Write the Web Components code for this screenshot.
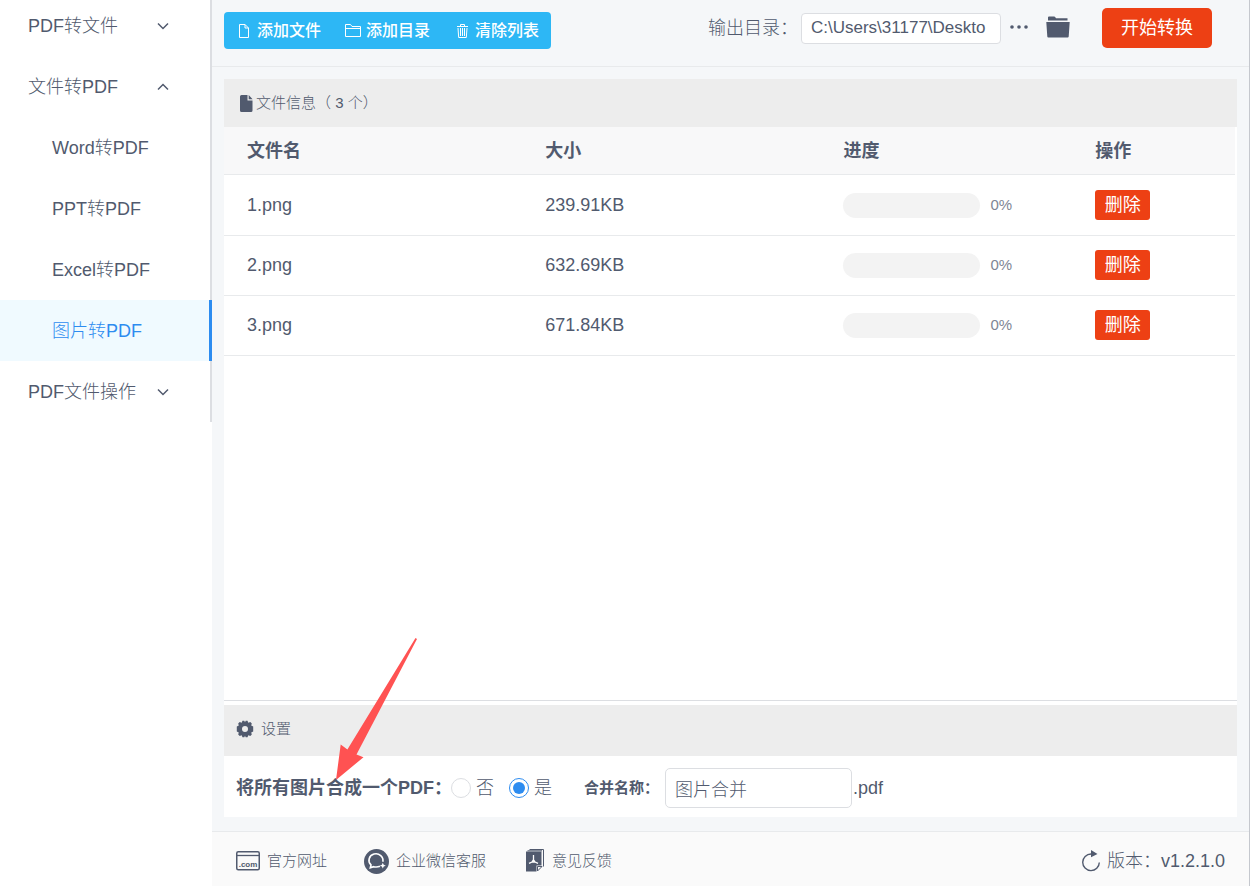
<!DOCTYPE html>
<html lang="zh-CN">
<head>
<meta charset="utf-8">
<meta name="viewport" content="width=device-width, initial-scale=1">
<title>图片转PDF</title>
<style>
    html, body { height: 100%; }
    body {
        margin: 0;
        background: #fff;
        color: #515a6e;
        font-family: "Liberation Sans", "Noto Sans CJK SC", sans-serif;
        font-size: 18px;
        font-weight: 300;
        line-height: 24px;
    }
</style>
</head>
<body>
<pdf-app>
    <pdf-menu slot="menu">
        <pdf-menu-item group>PDF转文件</pdf-menu-item>
        <pdf-menu-item group open>文件转PDF</pdf-menu-item>
        <pdf-menu-item>Word转PDF</pdf-menu-item>
        <pdf-menu-item>PPT转PDF</pdf-menu-item>
        <pdf-menu-item>Excel转PDF</pdf-menu-item>
        <pdf-menu-item active>图片转PDF</pdf-menu-item>
        <pdf-menu-item group>PDF文件操作</pdf-menu-item>
    </pdf-menu>
    <pdf-toolbar slot="toolbar"></pdf-toolbar>
    <pdf-file-list slot="files">
        <pdf-heading slot="heading" icon="file">文件信息（ 3 个）</pdf-heading>
    </pdf-file-list>
    <pdf-settings slot="settings">
        <pdf-heading slot="heading" icon="gear" spaced>设置</pdf-heading>
    </pdf-settings>
    <pdf-footer slot="footer">
        <pdf-footer-link icon="com">官方网址</pdf-footer-link>
        <pdf-footer-link icon="chat">企业微信客服</pdf-footer-link>
        <pdf-footer-link icon="feedback">意见反馈</pdf-footer-link>
        <pdf-footer-link slot="version" icon="refresh" large>版本：v1.2.1.0</pdf-footer-link>
    </pdf-footer>
</pdf-app>
<script>
const ICONS = {
    down: [12, 8, '<path d="M1 1.500l5 5 5-5" fill="none" stroke="currentColor" stroke-width="1.500"/>'],
    up: [12, 8, '<path d="M1 6.500l5-5 5 5" fill="none" stroke="currentColor" stroke-width="1.500"/>'],
    doc: [16, 16, '<path d="M3.500 1.500h5.500l3.500 3.500v9.500h-9zM9 1.500v3.500h3.500" fill="none" stroke="currentColor"/>'],
    folderLine: [16, 16, '<path d="M.5 13.500v-12h5l1.500 2h8.500v10zM.5 5.500h15" fill="none" stroke="currentColor"/>'],
    trash: [16, 16, '<path d="M3 3.500h11M6.500 3v-1.500h4v1.500M4 5l.7 9.500h7.600l.7-9.500M6.500 5v8M8.500 5v8M10.500 5v8" fill="none" stroke="currentColor"/>'],
    more: [18, 4, '<g fill="currentColor"><circle cx="2" cy="2" r="1.800"/><circle cx="9" cy="2" r="1.800"/><circle cx="16" cy="2" r="1.800"/></g>'],
    folder: [24, 22, '<path d="M2 4.500V1.500Q2 .5 3 .5h5q1 0 1.500 1l.5.8h11.500v2.200zM.3 6h23.400l-1 14.500q-.1 1-1 1H2.300q-.9 0-1-1z" fill="currentColor"/>'],
    file: [13, 17, '<path d="M1.500 0h6v5.500h5v10q0 1.500-1.500 1.500h-9.500q-1.500 0-1.500-1.500v-14q0-1.500 1.500-1.500zM8.700 0l3.900 4.300h-3.900z" fill="currentColor"/>'],
    gear: [18, 18, '<path fill-rule="evenodd" d="M6.500.8h1.800l.7 1.400.7-1.400h1.800l.8 2 2-.8 1.500 1.500-.6 2.100 2 .9v5l-2 .9.6 2.100-1.500 1.500-2-.8-.8 2H9.700L9 15.800l-.7 1.400H6.500l-.8-2-2 .8-1.500-1.500.6-2.100-2-.9v-5l2-.9-.6-2.100L3.700 2l2 .8zM9 6a3 3 0 1 0 0 6 3 3 0 0 0 0-6z" fill="currentColor"/>'],
    // domain badge, the extension is plain svg text
    com: [24, 20, '<rect x=".75" y=".75" width="22.500" height="18" rx="1.500" fill="none" stroke="currentColor" stroke-width="1.500"/><path d="M1 4.500h22" stroke="currentColor" stroke-width="1.300"/><text x="12" y="16" text-anchor="middle" font-family="Liberation Sans" font-size="8" font-weight="bold" fill="currentColor">.com</text>'],
    chat: [25, 25, '<circle cx="12.500" cy="12.500" r="12.500" fill="currentColor"/><path d="M16 17.300q-3.200 1.300-6.400.4l-3.300 1.100.7-2.900a7 6.500 0 1 1 11.800-3.200" fill="none" stroke="#fff" stroke-width="1.600"/><path d="M18.800 13.800l.9 2 2.100.9-2.100.9-.9 2-.9-2-2.100-.9 2.100-.9z" fill="#fff"/>'],
    feedback: [22, 23, '<path d="M6.500.5h14v17M4.500 1.800h14.500" fill="none" stroke="currentColor"/><path d="M3 2.500h15.500v14h-5v6H3z" fill="currentColor"/><path d="M14.500 22v-4.500h4.500z" fill="none" stroke="currentColor"/><path d="M10.500 6v4.500l-1.500 2.500-3 1.300M10.500 11l1.500 2 3 1.300M9 13h3" fill="none" stroke="#fff" stroke-width="1.300"/>'],
    refresh: [18, 22, '<path d="M12.500 4H9A8.300 8.300 0 1 0 17.300 12.500" fill="none" stroke="currentColor" stroke-width="1.400"/><path d="M9 0l6.500 4-6.500 3.200z" fill="currentColor"/>']
};

class PdfElement extends HTMLElement {
    constructor() {
        super();
        this.template = document.createElement('template');
        this.attachShadow({ mode: 'open' });
    }
    connectedCallback() {
        this.render();
    }
    render() {
        this.shadowRoot.innerHTML = '';
        this.template.innerHTML = this.html;
        this.shadowRoot.appendChild(this.template.content.cloneNode(true));
    }
}

class PdfIcon extends PdfElement {
    static get tag() { return 'pdf-icon'; }
    get html() {
        const [w, h, body] = ICONS[this.getAttribute('name')];
        return `
        <style>
        :host { display: block; flex: none; }
        svg { display: block; }
        </style>
        <svg width="${w}" height="${h}" viewBox="0 0 ${w} ${h}" aria-hidden="true">${body}</svg>`;
    }
}

class PdfApp extends PdfElement {
    static get tag() { return 'pdf-app'; }
    get html() {
        return `
        <style>
        :host {
            box-sizing: border-box;
            display: grid;
            grid-template-columns: 212px minmax(0, 1fr);
            min-height: 100vh;
            border-right: 1px solid #c5c8ce;
            position: relative;
        }
        main {
            background: #f5f7f9;
            display: flex;
            flex-direction: column;
        }
        .work {
            display: flex;
            flex: 1;
            flex-direction: column;
            padding: 12px 12px 14px;
        }
        slot[name=files] { display: flex; flex: 1; }
        .arrow {
            left: 336px;
            bottom: 106px;
            pointer-events: none;
            position: absolute;
        }
        </style>
        <slot name="menu"></slot>
        <main>
            <slot name="toolbar"></slot>
            <div class="work">
                <slot name="files"></slot>
                <slot name="settings"></slot>
            </div>
            <slot name="footer"></slot>
        </main>
        <svg class="arrow" width="82" height="142" viewBox="0 0 82 142" aria-hidden="true">
            <path d="M81 1L20.500 116.500l7 2.700L0 142l4.700-35.500 6.700 5L79.500 0z" fill="#ff5252"/>
        </svg>`;
    }
}

class PdfMenu extends PdfElement {
    static get tag() { return 'pdf-menu'; }
    get html() {
        return `
        <style>
        :host { display: block; overflow: hidden; }
        /* the list sits slightly scrolled under the window edge */
        nav {
            box-shadow: inset -2px 0 #dcdee2;
            margin-top: -5px;
        }
        </style>
        <nav><slot></slot></nav>`;
    }
}

class PdfMenuItem extends PdfElement {
    static get tag() { return 'pdf-menu-item'; }
    get html() {
        const group = this.hasAttribute('group');
        const open = this.hasAttribute('open');
        return `
        <style>
        :host { display: block; }
        button, a {
            align-items: center;
            background: none;
            border: 0;
            box-sizing: border-box;
            color: inherit;
            cursor: pointer;
            display: flex;
            font: inherit;
            height: 61px;
            justify-content: space-between;
            padding: 0 43px 0 28px;
            text-decoration: none;
            width: 100%;
        }
        a { padding-left: 52px; }
        :host([active]) a {
            background: #f0faff;
            border-right: 3px solid #2d8cf0;
            color: #2d8cf0;
        }
        </style>
        ${group
            ? `<button type="button" aria-expanded="${open}"><slot></slot><pdf-icon name="${open ? 'up' : 'down'}"></pdf-icon></button>`
            : '<a href="#"><span><slot></slot></span></a>'}`;
    }
}

class PdfToolbar extends PdfElement {
    static get tag() { return 'pdf-toolbar'; }
    get html() {
        return `
        <style>
        :host {
            border-bottom: 1px solid #e8eaec;
            box-sizing: border-box;
            display: flex;
            height: 67px;
            justify-content: space-between;
            padding: 0 37px 0 12px;
        }
        button {
            background: none;
            border: 0;
            color: inherit;
            cursor: pointer;
            font: inherit;
            padding: 0;
        }
        .group {
            background: #2db7f5;
            border-radius: 4px;
            color: #fff;
            display: flex;
            height: 37px;
            margin-top: 12px;
        }
        .group button {
            align-items: center;
            display: flex;
            font-size: 16px;
            font-weight: 500;
            gap: 5px;
            padding: 0 12px;
        }
        .output {
            align-items: center;
            display: flex;
            height: 56px;
        }
        input {
            background: #fff;
            border: 1px solid #dcdee2;
            border-radius: 4px;
            box-sizing: border-box;
            color: inherit;
            font: inherit;
            font-size: 17px;
            height: 31px;
            margin: 0 9px 0 3px;
            padding: 0 9px;
            width: 200px;
        }
        .browse, .open { padding-bottom: 2px; }
        .browse { margin-right: 18px; }
        .start {
            background: #ed4014;
            border-radius: 5px;
            color: #fff;
            font-weight: 400;
            height: 40px;
            margin-left: 32px;
            width: 110px;
        }
        </style>
        <div class="group">
            <button type="button"><pdf-icon name="doc"></pdf-icon>添加文件</button>
            <button type="button"><pdf-icon name="folderLine"></pdf-icon>添加目录</button>
            <button type="button"><pdf-icon name="trash"></pdf-icon>清除列表</button>
        </div>
        <div class="output">
            <label for="output">输出目录：</label>
            <input id="output" type="text" value="C:\\Users\\31177\\Deskto">
            <button type="button" class="browse" aria-label="更多"><pdf-icon name="more"></pdf-icon></button>
            <button type="button" class="open" aria-label="打开目录"><pdf-icon name="folder"></pdf-icon></button>
            <button type="button" class="start">开始转换</button>
        </div>`;
    }
}

class PdfHeading extends PdfElement {
    static get tag() { return 'pdf-heading'; }
    get html() {
        return `
        <style>
        :host {
            align-items: center;
            background: #ededed;
            box-sizing: border-box;
            display: flex;
            font-size: 15px;
            gap: 3px;
            height: 48px;
            padding: 0 16px;
        }
        :host([spaced]) {
            gap: 7px;
            height: 51px;
            padding: 0 12px 3px;
        }
        h2 { font: inherit; margin: 0; }
        </style>
        <pdf-icon name="${this.getAttribute('icon')}"></pdf-icon>
        <h2><slot></slot></h2>`;
    }
}

class PdfFileList extends PdfElement {
    constructor() {
        super();
        this.files = [
            { name: '1.png', size: '239.91KB' },
            { name: '2.png', size: '632.69KB' },
            { name: '3.png', size: '671.84KB' }
        ];
    }
    static get tag() { return 'pdf-file-list'; }
    get html() {
        return `
        <style>
        :host {
            background: #fff;
            border-bottom: 1px solid #dcdee2;
            display: block;
            flex: 1;
        }
        .wrap { padding-right: 2px; }
        table {
            border-collapse: separate;
            border-spacing: 0;
            table-layout: fixed;
            width: 100%;
        }
        th, td {
            border-bottom: 1px solid #e8eaec;
            box-sizing: border-box;
            padding: 0 0 0 23px;
            text-align: left;
        }
        th {
            background: #f8f8f9;
            font-weight: bold;
            height: 48px;
            width: 29.5%;
        }
        th:nth-child(3) { width: 24.9%; }
        th:nth-child(4) { width: 16.1%; }
        td { height: 60px; padding-bottom: 1px; }
        tr:first-child td { height: 61px; padding-bottom: 0; }
        .progress {
            align-items: center;
            color: #808695;
            display: flex;
            font-size: 15px;
            gap: 10px;
        }
        .bar {
            background: #f3f3f3;
            border-radius: 13px;
            height: 25px;
            width: 137px;
        }
        button {
            background: #ed4014;
            border: 0;
            border-radius: 3px;
            color: #fff;
            cursor: pointer;
            display: block;
            font: inherit;
            font-weight: 400;
            height: 30px;
            padding: 0;
            width: 55px;
        }
        </style>
        <slot name="heading"></slot>
        <div class="wrap">
            <table>
                <thead><tr><th>文件名</th><th>大小</th><th>进度</th><th>操作</th></tr></thead>
                <tbody>${this.files.map(f => `
                    <tr>
                        <td>${f.name}</td>
                        <td>${f.size}</td>
                        <td><div class="progress"><div class="bar" role="progressbar" aria-label="${f.name}" aria-valuenow="0"></div>0%</div></td>
                        <td><button type="button">删除</button></td>
                    </tr>`).join('')}
                </tbody>
            </table>
        </div>`;
    }
}

class PdfSettings extends PdfElement {
    static get tag() { return 'pdf-settings'; }
    get html() {
        return `
        <style>
        :host {
            background: #fff;
            display: block;
            padding-top: 4px;
        }
        form {
            align-items: center;
            box-sizing: border-box;
            display: flex;
            height: 61px;
            padding: 2px 0 0 12px;
            white-space: nowrap;
        }
        fieldset {
            align-items: center;
            border: 0;
            display: flex;
            margin: 0;
            padding: 0;
        }
        b { font-weight: bold; margin-right: -1px; }
        .option {
            align-items: center;
            display: flex;
            gap: 5px;
            margin-right: 15px;
        }
        input[type=radio] {
            appearance: none;
            background: #fff;
            border: 1px solid #dcdee2;
            border-radius: 50%;
            box-sizing: border-box;
            height: 20px;
            margin: 0;
            width: 20px;
        }
        input[type=radio]:checked {
            background: #2d8cf0;
            background-clip: content-box;
            border-color: #2d8cf0;
            padding: 3px;
        }
        .name {
            font-size: 15px;
            font-weight: bold;
            margin-left: 17px;
        }
        input[type=text] {
            border: 1px solid #dcdee2;
            border-radius: 5px;
            box-sizing: border-box;
            color: inherit;
            font: inherit;
            height: 40px;
            margin: 0 1px 0 6px;
            padding: 0 9px;
            width: 187px;
        }
        </style>
        <slot name="heading"></slot>
        <form>
            <fieldset aria-labelledby="merge">
                <b id="merge">将所有图片合成一个PDF：</b>
                <label class="option"><input type="radio" name="merge" value="no">否</label>
                <label class="option"><input type="radio" name="merge" value="yes" checked>是</label>
            </fieldset>
            <label class="name" for="name">合并名称：</label>
            <input id="name" type="text" value="图片合并">
            <span>.pdf</span>
        </form>`;
    }
}

class PdfFooter extends PdfElement {
    static get tag() { return 'pdf-footer'; }
    get html() {
        return `
        <style>
        :host {
            align-items: center;
            background: #fafafa;
            border-top: 1px solid #e8eaec;
            box-sizing: border-box;
            display: flex;
            height: 55px;
            justify-content: space-between;
            padding: 4px 24px 0;
        }
        .links { display: flex; gap: 37px; }
        </style>
        <div class="links"><slot></slot></div>
        <slot name="version"></slot>`;
    }
}

class PdfFooterLink extends PdfElement {
    static get tag() { return 'pdf-footer-link'; }
    get html() {
        return `
        <style>
        :host { display: block; font-size: 15px; }
        :host([large]) { font-size: 18px; }
        a {
            align-items: center;
            color: inherit;
            display: flex;
            gap: 7px;
            text-decoration: none;
        }
        </style>
        <a href="#"><pdf-icon name="${this.getAttribute('icon')}"></pdf-icon><span><slot></slot></span></a>`;
    }
}

[PdfIcon, PdfApp, PdfMenu, PdfMenuItem, PdfToolbar, PdfHeading, PdfFileList, PdfSettings, PdfFooter, PdfFooterLink]
    .forEach(el => window.customElements.define(el.tag, el));
</script>
</body>
</html>
